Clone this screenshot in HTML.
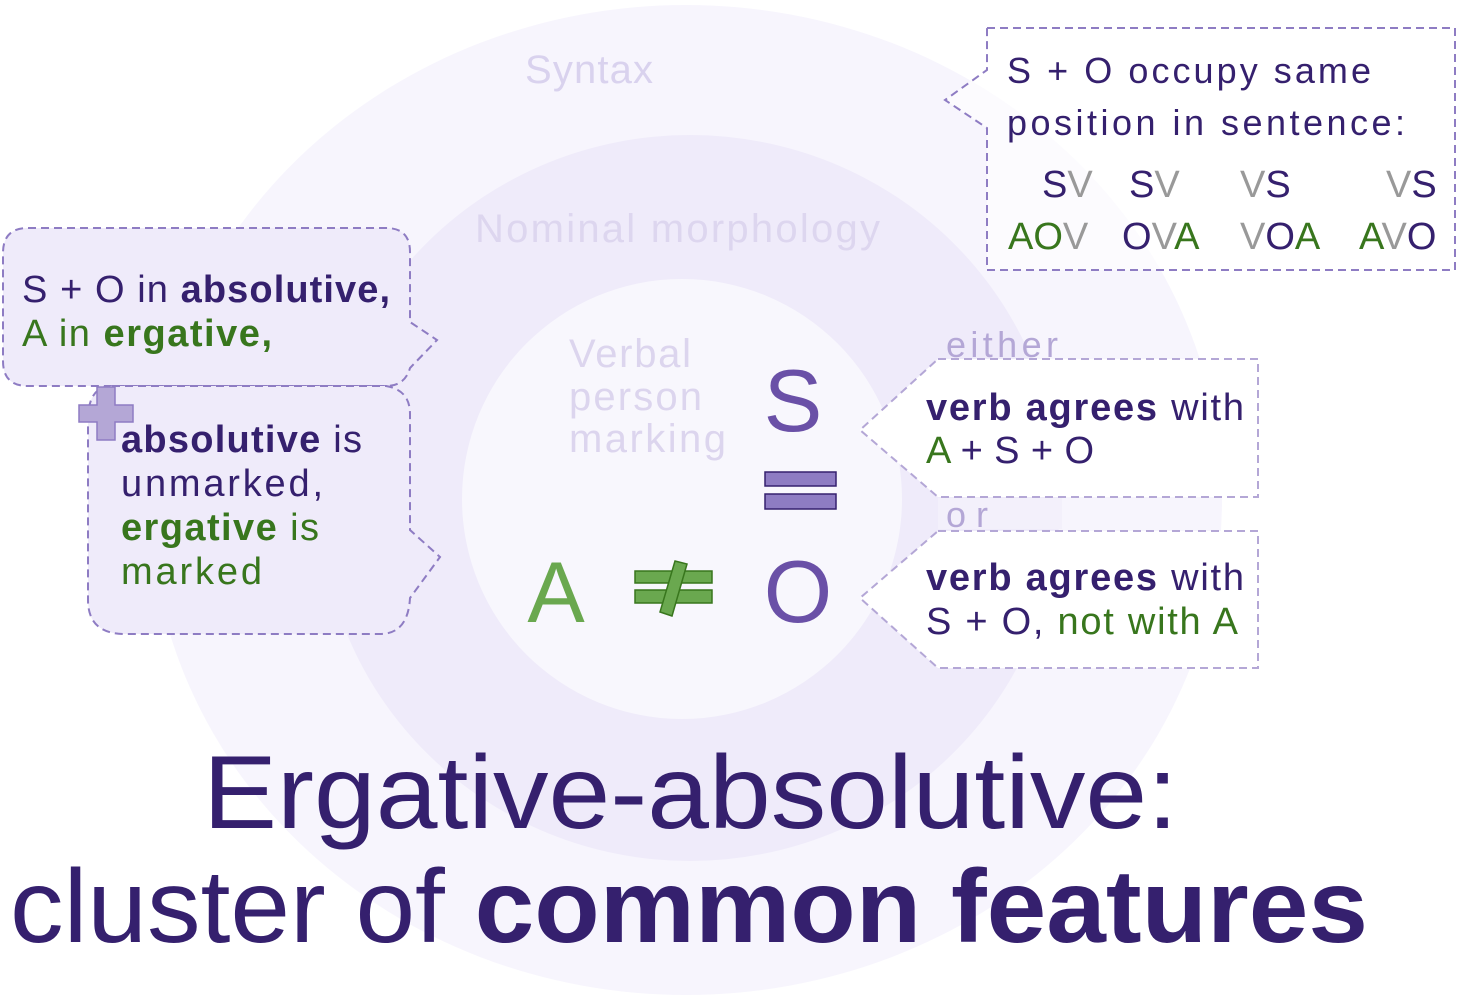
<!DOCTYPE html>
<html><head><meta charset="utf-8"><style>
html,body{margin:0;padding:0;background:#fff;width:1460px;height:1002px;overflow:hidden}
svg{display:block}
text{font-family:"Liberation Sans",sans-serif}
</style></head><body>
<svg width="1460" height="1002" viewBox="0 0 1460 1002" xmlns="http://www.w3.org/2000/svg">
<ellipse cx="686" cy="500" rx="536" ry="495" fill="#f7f5fd"/>
<ellipse cx="690" cy="498" rx="370" ry="363" fill="#efebfa"/>
<circle cx="682" cy="499" r="220" fill="#f8f7fd"/>

<text x="525" y="83" font-size="40" fill="#d9d2ee" textLength="128">Syntax</text>
<text x="475" y="242" font-size="40" fill="#ddd6ef" textLength="405">Nominal morphology</text>
<g font-size="40" fill="#dcd5ee">
<text x="569" y="367" textLength="122">Verbal</text>
<text x="569" y="410" textLength="133">person</text>
<text x="569" y="452" textLength="157">marking</text>
</g>

<!-- symbols -->
<text x="793" y="431" font-size="88" fill="#6a50a7" text-anchor="middle">S</text>
<rect x="765" y="472" width="71" height="14" fill="#8e7cc3" stroke="#35206e" stroke-width="1.5"/>
<rect x="765" y="494" width="71" height="15" fill="#8e7cc3" stroke="#35206e" stroke-width="1.5"/>
<text x="556" y="622" font-size="86" fill="#6aa84f" text-anchor="middle">A</text>
<rect x="635" y="571" width="77" height="12" fill="#6aa84f" stroke="#38761d" stroke-width="1.5"/>
<rect x="635" y="590" width="77" height="13" fill="#6aa84f" stroke="#38761d" stroke-width="1.5"/>
<polygon points="675,561 687,564 672,616 660,612" fill="#6aa84f" stroke="#38761d" stroke-width="1.5"/>
<text x="798" y="622" font-size="88" fill="#6a50a7" text-anchor="middle">O</text>

<!-- top right box -->
<path d="M987,28 H1455 V270 H987 V128 L945,100 L987,70 Z" fill="#fff" fill-opacity="0.6" stroke="#8e7cc3" stroke-width="2" stroke-dasharray="8,5"/>
<g font-size="36" fill="#35206e">
<text x="1007" y="83" textLength="364">S + O occupy same</text>
<text x="1007" y="135" textLength="398">position in sentence:</text>
<text y="197" font-size="38"><tspan x="1042" fill="#35206e">S</tspan><tspan fill="#999">V</tspan><tspan x="1129" fill="#35206e">S</tspan><tspan fill="#999">V</tspan><tspan x="1240" fill="#999">V</tspan><tspan fill="#35206e">S</tspan><tspan x="1386" fill="#999">V</tspan><tspan fill="#35206e">S</tspan></text>
<text y="249" font-size="38"><tspan x="1008" fill="#38761d">AO</tspan><tspan fill="#999">V</tspan><tspan x="1122" fill="#35206e">O</tspan><tspan fill="#999">V</tspan><tspan fill="#38761d">A</tspan><tspan x="1240" fill="#999">V</tspan><tspan fill="#35206e">O</tspan><tspan fill="#38761d">A</tspan><tspan x="1359" fill="#38761d">A</tspan><tspan fill="#999">V</tspan><tspan fill="#35206e">O</tspan></text>
</g>

<!-- left boxes -->
<path d="M28,228 H386 Q410,228 410,252 V322 L437,340 L410,368 Q405,386 386,386 H28 Q3,386 3,361 V253 Q3,228 28,228 Z" fill="#efebfa" stroke="#8e7cc3" stroke-width="2" stroke-dasharray="8,5"/>
<path d="M112,386 H386 Q410,390 410,414 V530 L440,557 L410,598 Q408,634 380,634 H125 Q88,634 88,600 V420 Q88,386 112,386 Z" fill="#efebfa" stroke="#8e7cc3" stroke-width="2" stroke-dasharray="8,5"/>
<path d="M97,387 H115 V405 H133 V422 H115 V440 H97 V422 H79 V405 H97 Z" fill="#b4a7d6" stroke="#8e7cc3" stroke-width="1.5"/>
<g font-size="38">
<text x="22" y="302" fill="#35206e" textLength="368">S + O in <tspan font-weight="bold">absolutive,</tspan></text>
<text x="22" y="346" fill="#38761d" textLength="250">A in <tspan font-weight="bold">ergative,</tspan></text>
<text x="121" y="452" fill="#35206e" textLength="241"><tspan font-weight="bold">absolutive</tspan> is</text>
<text x="121" y="496" fill="#35206e" textLength="202">unmarked,</text>
<text x="121" y="540" fill="#38761d" textLength="198"><tspan font-weight="bold">ergative</tspan> is</text>
<text x="121" y="584" fill="#38761d" textLength="141">marked</text>
</g>

<!-- right either/or boxes -->
<rect x="938" y="498" width="124" height="31" fill="#f3f0fb"/>
<text x="946" y="357" font-size="36" fill="#b4a7d6" textLength="112">either</text>
<text x="946" y="527" font-size="36" fill="#b4a7d6" textLength="42">or</text>
<path d="M938,359 H1258 V497 H938 L860,430 Z" fill="#fff" stroke="#b4a7d6" stroke-width="2" stroke-dasharray="8,5"/>
<path d="M938,531 H1258 V668 H938 L860,598 Z" fill="#fff" stroke="#b4a7d6" stroke-width="2" stroke-dasharray="8,5"/>
<g font-size="38" fill="#35206e">
<text x="926" y="420" textLength="318"><tspan font-weight="bold">verb agrees</tspan> with</text>
<text x="926" y="463" textLength="168"><tspan fill="#38761d">A</tspan> + S + O</text>
<text x="926" y="590" textLength="318"><tspan font-weight="bold">verb agrees</tspan> with</text>
<text x="926" y="634" textLength="312">S + O, <tspan fill="#38761d">not with A</tspan></text>
</g>

<!-- title -->
<text x="203" y="828" font-size="104" fill="#35206e" textLength="975" lengthAdjust="spacingAndGlyphs">Ergative-absolutive:</text>
<text x="10" y="942" font-size="104" fill="#35206e" textLength="1358" lengthAdjust="spacingAndGlyphs">cluster of <tspan font-weight="bold">common features</tspan></text>
</svg>
</body></html>
